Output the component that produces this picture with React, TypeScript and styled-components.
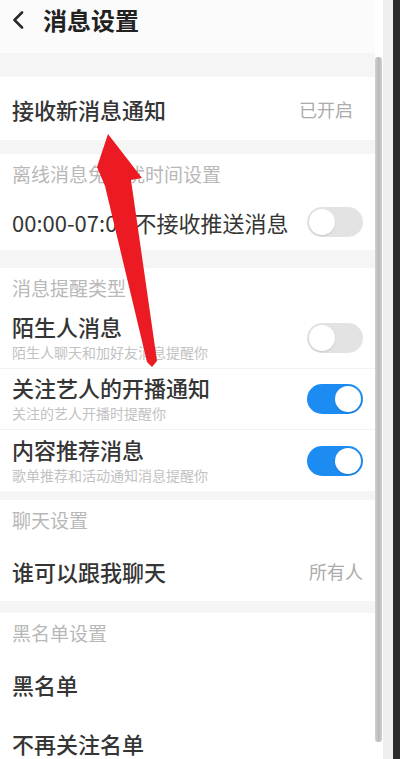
import styled, { createGlobalStyle } from "styled-components";

const GlobalStyle = createGlobalStyle`
  html, body {
    margin: 0;
    padding: 0;
    background: #ffffff;
  }
  body {
    font-family: "Noto Sans CJK SC", "Noto Sans", sans-serif;
  }
`;

const Frame = styled.div`
  display: flex;
  width: 400px;
  height: 759px;
  overflow: hidden;
  position: relative;
  background: #ffffff;
`;

const Content = styled.div`
  width: 375px;
  display: flex;
  flex-direction: column;
  flex-shrink: 0;
`;

const ScrollGutter = styled.div`
  width: 8px;
  flex-shrink: 0;
  background: #ffffff;
  padding-top: 57px;
  box-sizing: border-box;
`;

const Thumb = styled.div`
  width: 7px;
  height: 685px;
  border-radius: 3px;
  background: linear-gradient(to right, #d2d2d2, #b9b9b9 50%, #cfcfcf);
`;

const Bezel = styled.div`
  width: 10px;
  flex-shrink: 0;
  background: #efefef;
`;

const Edge = styled.div`
  width: 7px;
  flex-shrink: 0;
  background: #2b2b2b;
`;

const Header = styled.div`
  height: 53px;
  padding: 0 0 13px 12px;
  box-sizing: border-box;
  display: flex;
  align-items: center;
  gap: 19px;
  background: #fbfbfb;
`;

const Title = styled.h1`
  margin: 0;
  font-size: 24px;
  font-weight: 700;
  color: #222222;
  line-height: 40px;
`;

const Band = styled.div<{ $h: number }>`
  height: ${(p) => p.$h}px;
  flex-shrink: 0;
  background: #f5f5f5;
`;

const SectionTitle = styled.div`
  height: 40px;
  line-height: 40px;
  padding-left: 12px;
  font-size: 19px;
  color: #b8b8b8;
  flex-shrink: 0;
`;

const Row = styled.div<{ $h: number; $line?: boolean; $top?: number }>`
  height: ${(p) => p.$h}px;
  flex-shrink: 0;
  display: flex;
  align-items: ${(p) => (p.$top ? "flex-start" : "center")};
  justify-content: space-between;
  padding: ${(p) => p.$top ?? 0}px 12px 0;
  box-sizing: border-box;
  background: #ffffff;
  border-bottom: ${(p) => (p.$line ? "1px solid #f3f3f3" : "none")};
`;

const Texts = styled.div`
  display: flex;
  flex-direction: column;
  margin-bottom: 4px;

  & > div:first-child {
    line-height: 32px;
  }
`;

const Label = styled.div<{ $light?: boolean }>`
  font-size: 22px;
  font-weight: ${(p) => (p.$light ? 400 : 500)};
  color: #353535;
  line-height: 24px;
  white-space: nowrap;
`;

const Sub = styled.div`
  font-size: 14px;
  color: #c2c2c2;
  line-height: 20px;
  white-space: nowrap;
`;

const Value = styled.div<{ $inset?: number }>`
  font-size: 18px;
  color: #ababab;
  margin-right: ${(p) => p.$inset ?? 0}px;
`;

const Track = styled.div<{ $on: boolean }>`
  width: 56px;
  height: 30px;
  border-radius: 15px;
  background: ${(p) => (p.$on ? "#1c8cf2" : "#e3e3e3")};
  display: flex;
  align-items: center;
  justify-content: ${(p) => (p.$on ? "flex-end" : "flex-start")};
  padding: 0 2px;
  box-sizing: border-box;
  flex-shrink: 0;
`;

const Knob = styled.div`
  width: 26px;
  height: 26px;
  border-radius: 50%;
  background: #ffffff;
  box-shadow: 0 1px 2px rgba(0, 0, 0, 0.12);
`;

const Arrow = styled.svg`
  position: absolute;
  left: 0;
  top: 0;
  pointer-events: none;
`;

const Toggle = ({ on }: { on: boolean }) => (
  <Track $on={on}>
    <Knob />
  </Track>
);

const App = () => {
  return (
    <>
      <GlobalStyle />
      <Frame>
        <Content>
          <Header>
            <svg width="12" height="18" viewBox="0 0 12 18">
              <polyline
                points="10,1.5 2.5,9 10,16.5"
                fill="none"
                stroke="#2a2a2a"
                strokeWidth="2.6"
                strokeLinecap="round"
                strokeLinejoin="round"
              />
            </svg>
            <Title>消息设置</Title>
          </Header>
          <Band $h={24} />
          <Row $h={63}>
            <Label>接收新消息通知</Label>
            <Value $inset={10}>已开启</Value>
          </Row>
          <Band $h={14} />
          <SectionTitle>离线消息免打扰时间设置</SectionTitle>
          <Row $h={56}>
            <Label $light>00:00-07:00 不接收推送消息</Label>
            <Toggle on={false} />
          </Row>
          <Band $h={18} />
          <SectionTitle>消息提醒类型</SectionTitle>
          <Row $h={61} $line>
            <Texts>
              <Label>陌生人消息</Label>
              <Sub>陌生人聊天和加好友消息提醒你</Sub>
            </Texts>
            <Toggle on={false} />
          </Row>
          <Row $h={61} $line>
            <Texts>
              <Label>关注艺人的开播通知</Label>
              <Sub>关注的艺人开播时提醒你</Sub>
            </Texts>
            <Toggle on={true} />
          </Row>
          <Row $h={61}>
            <Texts>
              <Label>内容推荐消息</Label>
              <Sub>歌单推荐和活动通知消息提醒你</Sub>
            </Texts>
            <Toggle on={true} />
          </Row>
          <Band $h={9} />
          <SectionTitle>聊天设置</SectionTitle>
          <Row $h={61}>
            <Label>谁可以跟我聊天</Label>
            <Value>所有人</Value>
          </Row>
          <Band $h={12} />
          <SectionTitle>黑名单设置</SectionTitle>
          <Row $h={62}>
            <Label>黑名单</Label>
          </Row>
          <Row $h={44} $top={16}>
            <Label>不再关注名单</Label>
          </Row>
        </Content>
        <ScrollGutter>
          <Thumb />
        </ScrollGutter>
        <Bezel />
        <Edge />
        <Arrow width="400" height="759" viewBox="0 0 400 759">
          <polygon
            points="108,134 142,178 131,180 157,361 152,367 147,362 105,186 97,167"
            fill="#ec1b23"
          />
        </Arrow>
      </Frame>
    </>
  );
};

export default App;
